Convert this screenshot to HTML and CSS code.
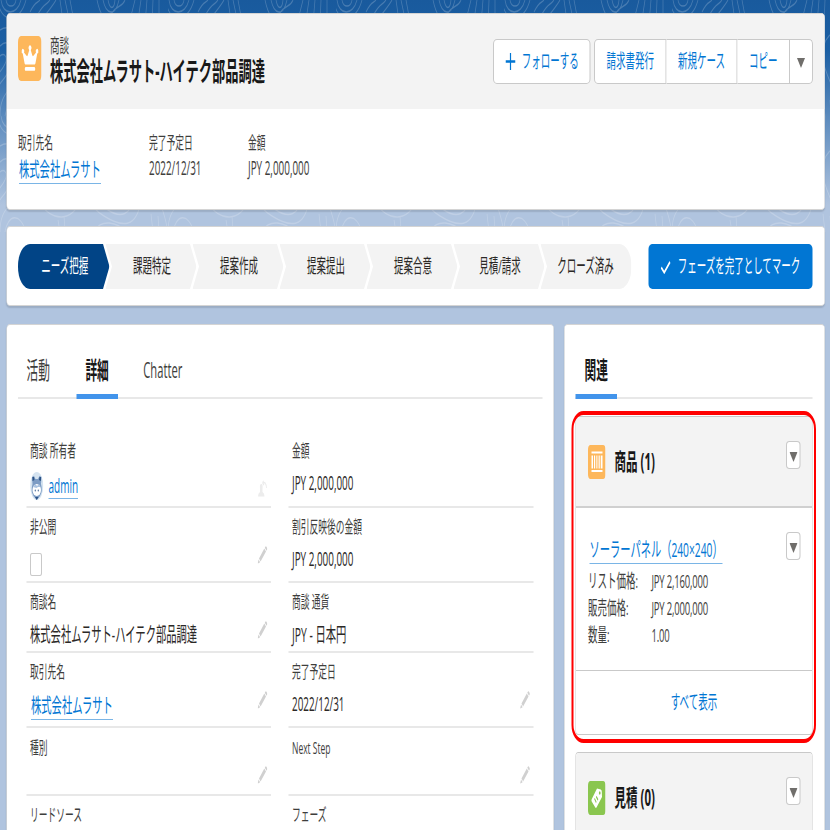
FILE: index.html
```html
<!DOCTYPE html>
<html lang="ja">
<head>
    <meta charset="UTF-8">
    <meta name="viewport" content="width=device-width, initial-scale=1.0">
    <title>株式会社ムラサト-ハイテク部品調達 | 商談</title>
    <link rel="stylesheet" href="styles.css">
</head>
<body>
    <!-- shared icons -->
    <svg class="defs" width="0" height="0">
        <symbol id="pencil" viewBox="0 0 20 18">
            <path d="M3 12.5 13.6 2.6 17 5.6 6.2 15.4z M14.6 1.8 16 .6Q17 0 18 .8L19.2 2Q20 3 19.2 3.8L18 4.8z M2.2 13.4 5.2 16.2 1 17.4Q.4 17.4 .6 16.8z"/>
        </symbol>
        <symbol id="arrow" viewBox="0 0 16 10">
            <path d="M0 0H16L8 10z"/>
        </symbol>
    </svg>

    <div class="page">
        <svg class="topo" width="1660" height="232">
            <defs>
                <pattern id="contours" width="336" height="116" patternUnits="userSpaceOnUse">
                    <g fill="none" stroke="#fff" stroke-width="1.5">
                        <path d="M2 0C6 16 34 16 42 0M12 0C14 8 30 8 32 0M-4 0C0 24 40 24 52 0M60 12C72 0 74 4 80 0M76 14C90 2 92 6 100 0M92 14C104 6 108 4 112 0"/>
                        <path d="M120 0 124 14M130 0 136 14M140 0 146 16M194 0C200 14 210 24 222 14S244 8 250 0M206 0C212 14 230 18 238 0M216 0C220 10 228 10 230 0M270 0 262 16M282 0 276 20M294 0 290 24M306 0 304 26M318 0 318 26"/>
                        <path d="M0 30C30 20 60 46 40 70S0 92 0 116M0 46C20 36 34 52 22 66S4 80 0 84M0 56C10 52 16 58 10 64S2 70 0 72"/>
                        <path d="M80 50C110 26 170 40 164 74S98 108 78 84S66 60 80 50z"/>
                        <path d="M92 56C114 38 154 50 150 72S104 98 90 80S82 66 92 56z"/>
                        <path d="M104 60C118 50 138 56 136 70S112 86 104 76S98 66 104 60z"/>
                        <path d="M200 66C228 40 290 56 282 84S246 112 208 100S182 82 200 66z"/>
                        <path d="M216 70C234 54 270 64 266 82S240 102 216 94S206 80 216 70z"/>
                        <path d="M228 76C240 66 256 70 252 82S236 92 228 88S222 82 228 76z"/>
                        <path d="M336 30C300 34 294 54 310 74S330 100 336 116M336 46C322 48 316 56 322 68S332 80 336 84"/>
                        <path d="M10 116C16 98 40 96 52 116M190 116C196 102 240 106 250 116M120 116 116 104M130 116 128 100M318 116 316 100M306 116 302 98"/>
                    </g>
                </pattern>
            </defs>
            <rect width="1660" height="232" fill="url(#contours)"/>
        </svg>

        <header class="card record">
            <div class="record-head">
                <svg class="record-icon" viewBox="0 0 47 45">
                    <rect width="47" height="45" rx="6" fill="#fdb75b"/>
                    <path d="M13 27 9.5 17.5A2.6 2.3 0 1 1 12 16.6L17.5 20Q19 20.5 19.6 19L22.4 14.2A3 2.6 0 1 1 25.6 14.2L28.4 19Q29 20.5 30.5 20L36 16.6A2.6 2.3 0 1 1 38.5 17.5L35 27Q34.6 28.4 33.5 28.4H14.5Q13.4 28.4 13 27z M15.5 31H32.5Q34.5 31 34.5 32.9Q34.5 34.8 32.5 34.8H15.5Q13.5 34.8 13.5 32.9Q13.5 31 15.5 31z" fill="#fff"/>
                </svg>
                <div class="record-name">
                    <p>商談</p>
                    <h1>株式会社ムラサト-ハイテク部品調達</h1>
                </div>
                <div class="actions">
                    <button class="btn follow">
                        <svg width="20" height="17" viewBox="0 0 20 17"><path d="M10 0V17M0 8.5H20" stroke="#0176d3" stroke-width="2.4"/></svg>
                        フォローする
                    </button>
                    <div class="btn-group">
                        <button class="btn b1">請求書発行</button>
                        <button class="btn b2">新規ケース</button>
                        <button class="btn b3">コピー</button>
                        <button class="btn b4"><svg class="arrow"><use href="#arrow"/></svg></button>
                    </div>
                </div>
            </div>
            <dl class="highlights">
                <div class="h1"><dt>取引先名</dt><dd><a href="#" class="link">株式会社ムラサト</a></dd></div>
                <div class="h2"><dt>完了予定日</dt><dd>2022/12/31</dd></div>
                <div class="h3"><dt>金額</dt><dd>JPY 2,000,000</dd></div>
            </dl>
        </header>

        <section class="card path">
            <ol class="steps">
                <li class="step current">ニーズ把握</li>
                <li class="step">課題特定</li>
                <li class="step">提案作成</li>
                <li class="step">提案提出</li>
                <li class="step">提案合意</li>
                <li class="step">見積/請求</li>
                <li class="step last">クローズ済み</li>
            </ol>
            <button class="complete">
                <svg width="21" height="13" viewBox="0 0 21 13"><path d="M1.5 6.5 7.5 11.5 19 1" fill="none" stroke="#fff" stroke-width="2.6"/></svg>
                フェーズを完了としてマーク
            </button>
        </section>

        <main class="columns">
            <section class="card detail">
                <nav class="tabs">
                    <a class="tab">活動</a>
                    <a class="tab active">詳細</a>
                    <a class="tab latin">Chatter</a>
                </nav>
                <div class="fields">
                    <div class="field">
                        <div>
                            <p class="label">商談 所有者</p>
                            <p class="value owner">
                                <svg class="avatar" viewBox="0 0 27 28">
                                    <ellipse cx="13.5" cy="14" rx="13" ry="14" fill="#d5e3f0"/>
                                    <path d="M4 5 8 4 11 7H16L19 4 23 5 22 12Q26 19 20 24L13.5 28 7 24Q1 19 5 12z" fill="#7d9cc4"/>
                                    <path d="M5 5 8 5 9 8 5 9zM22 5 19 5 18 8 22 9zM10 25H17L13.5 28z" fill="#2c5285"/>
                                    <ellipse cx="13.5" cy="18" rx="8.5" ry="6" fill="#fff"/>
                                    <path d="M6 15 11 12 14 14 18 12 21 15 16 15 13 16z" fill="#a9c2e0"/>
                                    <circle cx="10.5" cy="18.5" r="1.1" fill="#35598a"/>
                                    <circle cx="16.5" cy="18.5" r="1.1" fill="#35598a"/>
                                </svg>
                                <a href="#" class="link">admin</a>
                            </p>
                        </div>
                        <svg class="change-owner" viewBox="0 0 20 18">
                            <path d="M1 16.5Q1 13 5 12V9Q4 4 7.5 4T10 9V12Q14 13 14 16.5z" fill="#ececec"/>
                            <path d="M10 3Q17 1 18 8M10 3 12 .8M10 3 13 5" fill="none" stroke="#ececec" stroke-width="1.6"/>
                        </svg>
                    </div>
                    <div class="field">
                        <div><p class="label">金額</p><p class="value number">JPY 2,000,000</p></div>
                    </div>
                    <div class="field">
                        <div><p class="label">非公開</p><span class="checkbox"></span></div>
                        <svg class="pencil"><use href="#pencil"/></svg>
                    </div>
                    <div class="field">
                        <div><p class="label">割引反映後の金額</p><p class="value number">JPY 2,000,000</p></div>
                    </div>
                    <div class="field">
                        <div><p class="label">商談名</p><p class="value">株式会社ムラサト-ハイテク部品調達</p></div>
                        <svg class="pencil"><use href="#pencil"/></svg>
                    </div>
                    <div class="field">
                        <div><p class="label">商談 通貨</p><p class="value">JPY - 日本円</p></div>
                    </div>
                    <div class="field">
                        <div><p class="label">取引先名</p><p class="value"><a href="#" class="link account">株式会社ムラサト</a></p></div>
                        <svg class="pencil"><use href="#pencil"/></svg>
                    </div>
                    <div class="field">
                        <div><p class="label">完了予定日</p><p class="value number">2022/12/31</p></div>
                        <svg class="pencil"><use href="#pencil"/></svg>
                    </div>
                    <div class="field">
                        <div><p class="label low">種別</p></div>
                        <svg class="pencil"><use href="#pencil"/></svg>
                    </div>
                    <div class="field">
                        <div><p class="label low latin">Next Step</p></div>
                        <svg class="pencil"><use href="#pencil"/></svg>
                    </div>
                    <div class="field">
                        <div><p class="label">リードソース</p></div>
                    </div>
                    <div class="field">
                        <div><p class="label">フェーズ</p></div>
                    </div>
                </div>
            </section>

            <aside class="card related">
                <nav class="tabs">
                    <a class="tab active">関連</a>
                </nav>
                <article class="list-card products">
                    <div class="list-head">
                        <svg class="list-icon" viewBox="0 0 35 34">
                            <rect width="35" height="34" rx="5" fill="#fdb75b"/>
                            <path d="M7 7.5H29M7 26H29" stroke="#fff" stroke-width="2.2"/>
                            <path d="M8.5 10.5V23.5M27.5 10.5V23.5" stroke="#fff" stroke-width="3"/>
                            <path d="M13 10.5V23.5M23.5 10.5V23.5" stroke="#fff" stroke-width="2"/>
                            <path d="M16.5 10.5V23.5M20 10.5V23.5" stroke="#fff" stroke-width="1.6"/>
                        </svg>
                        <h2>商品 (1)</h2>
                        <button class="menu"><svg class="arrow"><use href="#arrow"/></svg></button>
                    </div>
                    <div class="list-body">
                        <div>
                            <a href="#" class="link product">ソーラーパネル（240×240）</a>
                            <dl class="product-info">
                                <dt>リスト価格:</dt><dd>JPY 2,160,000</dd>
                                <dt>販売価格:</dt><dd>JPY 2,000,000</dd>
                                <dt>数量:</dt><dd>1.00</dd>
                            </dl>
                        </div>
                        <button class="menu"><svg class="arrow"><use href="#arrow"/></svg></button>
                    </div>
                    <a href="#" class="view-all">すべて表示</a>
                    <span class="highlight"></span>
                </article>
                <article class="list-card">
                    <div class="list-head">
                        <svg class="list-icon" viewBox="0 0 35 34">
                            <rect width="35" height="34" rx="5" fill="#8ac64f"/>
                            <path d="M18 7.5 25.5 8.5Q27.5 9 27.6 10.8L28 16 17 26.6Q15.8 27.4 14.6 26.6L7.4 20.6Q6.4 19.4 7.4 18.2z" fill="#fff"/>
                            <circle cx="23.5" cy="12" r="1.7" fill="#8ac64f"/>
                            <path d="M13 17.5 16.5 21.5M16.5 15.5 20 19" stroke="#8ac64f" stroke-width="1.8"/>
                        </svg>
                        <h2>見積 (0)</h2>
                        <button class="menu"><svg class="arrow"><use href="#arrow"/></svg></button>
                    </div>
                </article>
            </aside>
        </main>
    </div>
</body>
</html>
```
FILE: styles.css
```css
* {
    box-sizing: border-box;
    margin: 0;
    padding: 0;
}

html {
    overflow: hidden;
}

body {
    width: 830px;
    height: 830px;
    overflow: hidden;
    font-family: "Open Sans", "Noto Sans CJK JP", sans-serif;
    color: #3e3e3c;
}

.defs {
    position: absolute;
}

/* wide desktop layout condensed to half its width */
.page {
    position: relative;
    width: 1660px;
    height: 830px;
    padding: 13px 10px 0 13px;
    overflow: hidden;
    transform: scaleX(0.5);
    transform-origin: 0 0;
    background: linear-gradient(#195a9d 0, #1b5fa4 50px, #b0c4df 205px);
    font-size: 19px;
}

.topo {
    position: absolute;
    top: 0;
    left: 0;
    opacity: 0.2;
}

.card {
    position: relative;
    background: #fff;
    border: 1px solid #d4d4d4;
    border-radius: 7px / 5px;
    box-shadow: 0 2px 2px rgba(0, 0, 0, 0.12);
}

button {
    font-family: inherit;
    font-size: 19px;
    line-height: 24px;
    white-space: nowrap;
    cursor: pointer;
}

.link {
    display: inline-block;
    color: #0176d3;
    text-decoration: none;
    border-bottom: 1px solid #7ab5e6;
}

.arrow {
    display: block;
    width: 16px;
    height: 10px;
    fill: #706e6b;
}

/* record header */
.record {
    height: 197px;
    overflow: hidden;
}

.record-head {
    display: flex;
    align-items: flex-start;
    height: 95px;
    padding: 22px 23px 0 22px;
    background: #f3f3f3;
}

.record-icon {
    width: 47px;
    height: 45px;
}

.record-name {
    margin-left: 17px;
}

.record-name p {
    font-size: 19px;
    line-height: 20px;
}

h1 {
    color: #181818;
    font-size: 26.5px;
    line-height: 31px;
}

.actions {
    display: flex;
    gap: 7px;
    margin: 3px 0 0 auto;
}

.btn {
    display: flex;
    align-items: center;
    justify-content: center;
    height: 45px;
    padding-bottom: 2px;
    background: #fff;
    border: 1px solid #c9c9c9;
    color: #0176d3;
    border-width: 1px 2px;
}

.follow {
    width: 195px;
    gap: 12px;
    padding-left: 2px;
    border-radius: 8px / 5px;
}

.follow svg {
    margin-top: 2px;
}

.btn-group {
    display: flex;
}

.btn-group .btn + .btn {
    border-left: 0;
}

.b1 {
    width: 145px;
    border-radius: 8px 0 0 8px / 5px 0 0 5px;
}

.b2 {
    width: 142px;
}

.b3 {
    width: 105px;
}

.b4 {
    width: 46px;
    padding: 2px 0 0;
    border-radius: 0 8px 8px 0 / 0 5px 5px 0;
}

.highlights {
    display: flex;
    padding: 22px 22px 0;
}

.highlights dt {
    font-size: 17.5px;
    line-height: 22px;
}

.highlights dd {
    color: #3e3e3c;
    font-size: 19.8px;
    line-height: 30px;
}

.highlights .link {
    margin-left: 2px;
    font-size: 20.6px;
    line-height: 28px;
    padding-top: 2px;
}

.highlights .h1 {
    width: 262px;
}

.highlights .h2 {
    width: 198px;
}

/* sales path */
.path {
    display: flex;
    align-items: flex-start;
    justify-content: space-between;
    height: 80px;
    margin-top: 16px;
    padding: 17px 24px 0 22px;
}

.steps {
    display: flex;
    list-style: none;
}

.step {
    width: 182px;
    height: 45px;
    padding-left: 4px;
    background: #f3f3f3;
    color: #2b2826;
    font-size: 19px;
    line-height: 44px;
    text-align: center;
    clip-path: polygon(0 0, 169px 0, 100% 50%, 169px 100%, 0 100%, 13px 50%);
}

.step + .step {
    margin-left: -8px;
}

.step.current {
    width: 183px;
    background: #014486;
    color: #fff;
    border-radius: 24px 0 0 24px / 22px 0 0 22px;
    clip-path: polygon(0 0, 170px 0, 100% 50%, 170px 100%, 0 100%);
}

.step.last {
    padding-left: 0;
    padding-right: 2px;
    border-radius: 0 24px 24px 0 / 0 22px 22px 0;
    clip-path: polygon(0 0, 100% 0, 100% 100%, 0 100%, 13px 50%);
}

.complete {
    display: flex;
    align-items: center;
    justify-content: center;
    gap: 13px;
    width: 328px;
    height: 45px;
    padding-bottom: 2px;
    background: #0176d3;
    color: #fff;
    border: none;
    border-radius: 8px / 5px;
}

.complete svg {
    margin-top: 4px;
}

/* columns */
.columns {
    display: flex;
    gap: 20px;
    margin-top: 18px;
}

.detail {
    width: 1095px;
    height: 530px;
    padding: 0 22px;
}

.related {
    width: 522px;
    height: 530px;
    padding: 0 24px 0 22px;
}

.tabs {
    display: flex;
    height: 74px;
    border-bottom: 2px solid #e8e8e8;
}

.tab {
    height: 74px;
    margin-right: 36px;
    padding: 29px 17px 0;
    font-size: 23.4px;
    line-height: 32px;
}

.tab.active {
    padding: 29px 18px 0;
    color: #181818;
    font-weight: bold;
    border-bottom: 5px solid #4294eb;
}

.tab.latin {
    padding-left: 15px;
    font-size: 22.4px;
}

.fields {
    display: grid;
    grid-template-columns: 489px 490px;
    grid-template-rows: 76px 75px 70px 75px 68px 75px;
    column-gap: 35px;
    padding: 33px 0 0 17px;
}

.field {
    display: flex;
    justify-content: space-between;
    padding: 6px 7px 0;
    border-bottom: 2px solid #e8e8e8;
}

.label {
    font-size: 17.5px;
    line-height: 25px;
}

.label.low {
    padding-top: 1px;
}

.label.latin {
    font-size: 17px;
}

.value {
    margin-top: 6px;
    color: #2b2826;
    font-size: 20.6px;
    line-height: 28px;
}

.value.number {
    font-size: 19.8px;
}

.owner {
    display: flex;
    align-items: center;
    gap: 10px;
    margin-top: 9px;
    font-size: 20px;
}

.owner .link {
    padding-top: 1px;
    line-height: 24px;
}

.avatar {
    width: 27px;
    height: 28px;
}

.account {
    margin-left: 2px;
    padding-top: 1px;
    font-size: 20.6px;
}

.checkbox {
    display: block;
    width: 24px;
    height: 23px;
    margin-top: 14px;
    background: #fff;
    border: 1px solid #c9c9c9;
    border-width: 1px 2px;
    border-radius: 4px / 3px;
}

.pencil,
.change-owner {
    width: 20px;
    height: 18px;
    margin-top: 32px;
    fill: #d0d0d0;
}

.change-owner {
    margin-top: 42px;
}

/* related lists */
.list-card {
    position: relative;
    margin-top: 17px;
    background: #fff;
    border: 1px solid #c9c9c9;
    border-radius: 6px / 4px;
}

.list-head {
    display: flex;
    height: 91px;
    padding: 28px 23px 0 24px;
    background: #f3f3f3;
    border-bottom: 2px solid #d0d0d0;
    border-radius: 6px 6px 0 0 / 4px 4px 0 0;
}

.list-icon {
    width: 35px;
    height: 34px;
}

h2 {
    margin-left: 18px;
    color: #181818;
    font-size: 23px;
    line-height: 33px;
}

.menu {
    display: flex;
    align-items: center;
    justify-content: center;
    width: 29px;
    height: 28px;
    margin: -4px 0 0 auto;
    background: #fff;
    border: 1px solid #c9c9c9;
    border-width: 1px 2px;
    border-radius: 7px / 4px;
}

.menu .arrow {
    margin-top: 4px;
}

.list-body {
    display: flex;
    height: 163px;
    padding: 28px 23px 0 24px;
    border-bottom: 1px solid #c9c9c9;
}

.product {
    margin-left: 3px;
    font-size: 20.5px;
    line-height: 27px;
    white-space: nowrap;
}

.list-body .menu {
    margin-top: -4px;
}

.product-info {
    display: grid;
    grid-template-columns: 127px auto;
    font-size: 19px;
    line-height: 27px;
    margin-top: 4px;
}

.product-info dd {
    letter-spacing: -0.4px;
}

.view-all {
    display: block;
    height: 63px;
    color: #0176d3;
    line-height: 62px;
    text-align: center;
    text-decoration: none;
}

/* red frame around the products list */
.highlight {
    position: absolute;
    top: -6px;
    right: -8px;
    bottom: -9px;
    left: -9px;
    border: 4px solid #f00;
    border-radius: 24px / 18px;
    pointer-events: none;
}
```
